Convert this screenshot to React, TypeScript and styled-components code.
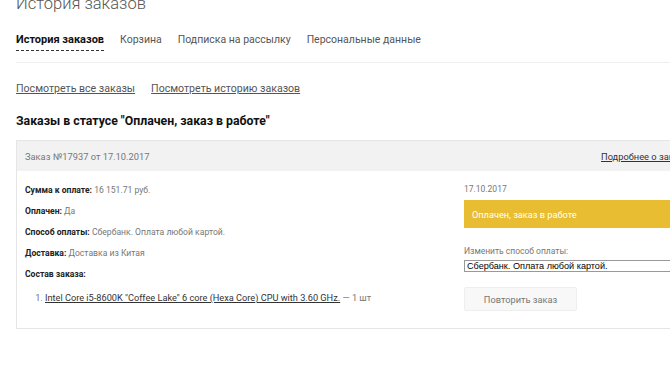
import React from 'react';
import styled, { createGlobalStyle } from 'styled-components';

const GlobalStyle = createGlobalStyle`
    html, body {
        margin: 0;
        padding: 0;
        background: #fff;
        overflow: hidden;
    }
    body {
        font-family: Roboto, 'Noto Sans', Arial, sans-serif;
        color: #555;
    }
`;

const tabs = ['История заказов', 'Корзина', 'Подписка на рассылку', 'Персональные данные'];

const details = [
    { label: 'Сумма к оплате:', value: '16 151.71 руб.' },
    { label: 'Оплачен:', value: 'Да' },
    { label: 'Способ оплаты:', value: 'Сбербанк. Оплата любой картой.' },
    { label: 'Доставка:', value: 'Доставка из Китая' },
    { label: 'Состав заказа:', value: '' },
];

export default function App() {
    return (
        <>
            <GlobalStyle />
            <StyledPage>
                <StyledTitle>История заказов</StyledTitle>
                <StyledTabs>
                    {tabs.map((tab, i) => (
                        <StyledTab key={tab} $active={i === 0}>
                            {tab}
                        </StyledTab>
                    ))}
                </StyledTabs>

                <StyledLinks>
                    <StyledLink href="#">Посмотреть все заказы</StyledLink>
                    <StyledLink href="#">Посмотреть историю заказов</StyledLink>
                </StyledLinks>

                <StyledHeading>Заказы в статусе "Оплачен, заказ в работе"</StyledHeading>

                <StyledCard>
                    <StyledCardHeader>
                        <span>Заказ №17937 от 17.10.2017</span>
                        <StyledMoreLink href="#">Подробнее о заказе</StyledMoreLink>
                    </StyledCardHeader>
                    <StyledCardBody>
                        <StyledInfo>
                            {details.map((row) => (
                                <StyledRow key={row.label}>
                                    <b>{row.label}</b> {row.value}
                                </StyledRow>
                            ))}
                            <StyledItems>
                                <li>
                                    <a href="#">Intel Core i5-8600K "Coffee Lake" 6 core (Hexa Core) CPU with 3.60 GHz.</a> — 1 шт
                                </li>
                            </StyledItems>
                        </StyledInfo>
                        <StyledSide>
                            <StyledDate>17.10.2017</StyledDate>
                            <StyledStatus>Оплачен, заказ в работе</StyledStatus>
                            <StyledHint>Изменить способ оплаты:</StyledHint>
                            <StyledSelect defaultValue="sber">
                                <option value="sber">Сбербанк. Оплата любой картой.</option>
                            </StyledSelect>
                            <StyledRepeatButton>Повторить заказ</StyledRepeatButton>
                        </StyledSide>
                    </StyledCardBody>
                </StyledCard>
            </StyledPage>
        </>
    );
}

const StyledPage = styled.div`
    width: 1100px;
    padding: 0 0 0 16px;
    margin-top: -8px;
`;

const StyledTitle = styled.h1`
    margin: 1px 0 0;
    font-size: 16.5px;
    font-weight: 300;
    line-height: 22px;
    color: #555;
`;

const StyledTabs = styled.div`
    display: flex;
    gap: 16px;
    margin-top: 17px;
    padding-bottom: 11px;
    border-bottom: 1px solid #eee;
`;

const StyledTab = styled.span<{ $active?: boolean }>`
    font-size: ${(p) => (p.$active ? '11px' : '10.5px')};
    line-height: 16px;
    padding-bottom: 2px;
    color: ${(p) => (p.$active ? '#111' : '#555')};
    font-weight: ${(p) => (p.$active ? 700 : 400)};
    border-bottom: ${(p) => (p.$active ? '1px dashed #333' : '1px solid transparent')};
`;

const StyledLinks = styled.div`
    display: flex;
    gap: 16px;
    margin-top: 18px;
`;

const StyledLink = styled.a`
    font-size: 10.6px;
    line-height: 16px;
    color: #555;
    text-decoration: underline;
`;

const StyledHeading = styled.h2`
    margin: 15px 0 0;
    font-size: 12.3px;
    font-weight: 700;
    line-height: 18px;
    color: #111;
`;

const StyledCard = styled.div`
    margin-top: 10px;
    border: 1px solid #e6e6e6;
`;

const StyledCardHeader = styled.div`
    display: flex;
    align-items: center;
    height: 30px;
    padding: 0 8px;
    background: #f2f2f2;
    font-size: 9.3px;
    color: #777;
    span {
        width: 576px;
    }
`;

const StyledMoreLink = styled.a`
    color: #333;
    text-decoration: underline;
`;

const StyledCardBody = styled.div`
    display: grid;
    grid-template-columns: 439px 1fr;
    padding: 10px 8px 17px;
`;

const StyledInfo = styled.div`
    font-size: 8.6px;
    color: #777;
    b {
        color: #222;
    }
`;

const StyledRow = styled.div`
    line-height: 12px;
    margin: 3px 0 9px;
`;

const StyledItems = styled.ol`
    margin: 12px 0 0;
    padding-left: 20px;
    font-size: 9.2px;
    color: #777;
    a {
        color: #333;
        text-decoration: underline;
    }
`;

const StyledSide = styled.div`
    display: flex;
    flex-direction: column;
    align-items: flex-start;
    font-size: 8.5px;
    color: #777;
`;

const StyledDate = styled.div`
    line-height: 12px;
    margin-top: 2px;
`;

const StyledStatus = styled.div`
    align-self: stretch;
    margin-top: 5px;
    height: 28px;
    display: flex;
    align-items: center;
    padding: 0 8px;
    background: #e8bd32;
    color: #fff;
    font-size: 9.2px;
`;

const StyledHint = styled.div`
    margin-top: 17px;
    line-height: 12px;
`;

const StyledSelect = styled.select`
    margin-top: 3px;
    width: 400px;
    height: 12px;
    padding: 0 0 0 2px;
    border: 1px solid #999;
    border-radius: 0;
    font-family: 'Liberation Sans', Arial, sans-serif;
    font-size: 9.1px;
    line-height: 10px;
    color: #000;
    background: #fff;
    appearance: none;
`;

const StyledRepeatButton = styled.button`
    margin-top: 15px;
    width: 113px;
    height: 24px;
    border: 1px solid #eee;
    border-radius: 2px;
    background: #f8f8f8;
    font-family: Roboto, sans-serif;
    font-size: 9.25px;
    color: #777;
`;
